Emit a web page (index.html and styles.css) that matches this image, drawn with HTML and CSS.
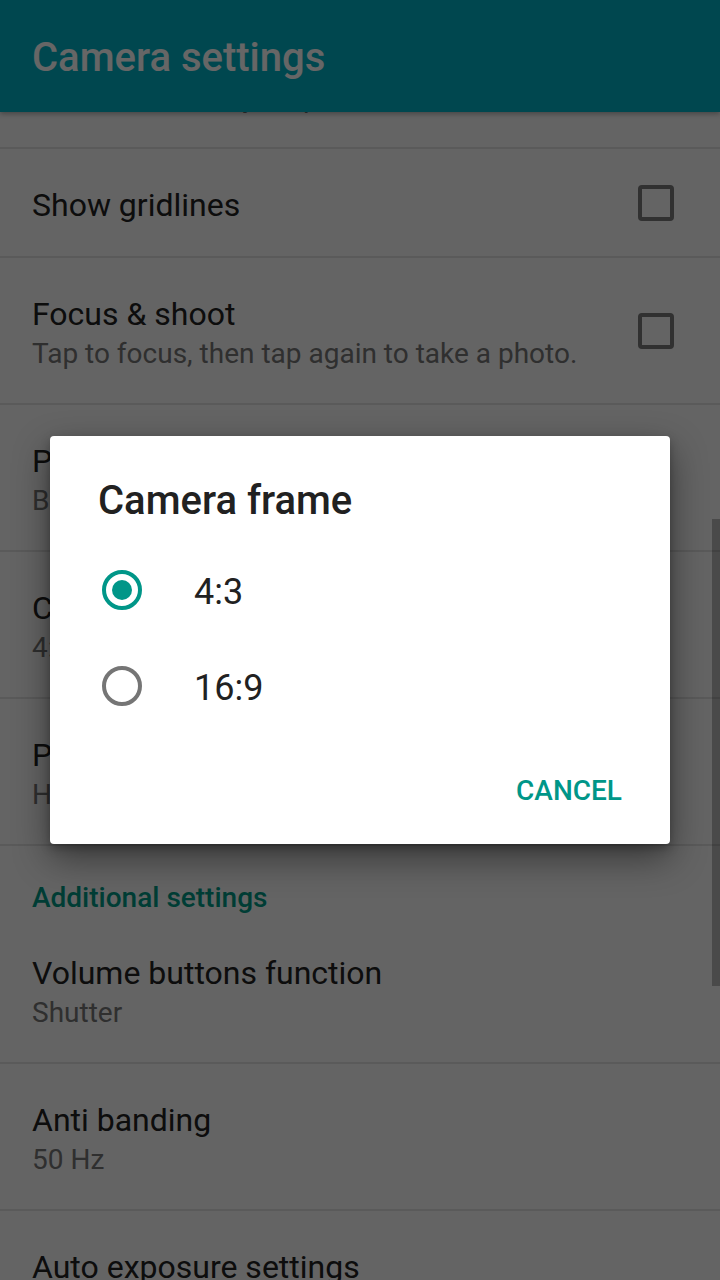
FILE: index.html
```html
<!DOCTYPE html>
<html lang="en">
<head>
<meta charset="utf-8">
<title>Camera settings</title>
<link rel="stylesheet" href="styles.css">
</head>
<body>
<div class="screen">
  <header class="appbar">
    <h1 class="appbar-title">Camera settings</h1>
  </header>

  <div class="scroller">
    <div class="list">
      <div class="pref">
        <div class="pref-text">
          <div class="pref-title">Save location</div>
          <div class="pref-summary">Adds location to your photos</div>
        </div>
      </div>
      <div class="pref single">
        <div class="pref-text">
          <div class="pref-title">Show gridlines</div>
        </div>
        <span class="checkbox"></span>
      </div>
      <div class="pref">
        <div class="pref-text">
          <div class="pref-title">Focus &amp; shoot</div>
          <div class="pref-summary">Tap to focus, then tap again to take a photo.</div>
        </div>
        <span class="checkbox"></span>
      </div>
      <div class="pref">
        <div class="pref-text">
          <div class="pref-title">Picture quality</div>
          <div class="pref-summary">Best</div>
        </div>
      </div>
      <div class="pref">
        <div class="pref-text">
          <div class="pref-title">Camera frame</div>
          <div class="pref-summary">4:3</div>
        </div>
      </div>
      <div class="pref">
        <div class="pref-text">
          <div class="pref-title">Photo resolution</div>
          <div class="pref-summary">High</div>
        </div>
      </div>
      <div class="category">Additional settings</div>
      <div class="pref">
        <div class="pref-text">
          <div class="pref-title">Volume buttons function</div>
          <div class="pref-summary">Shutter</div>
        </div>
      </div>
      <div class="pref">
        <div class="pref-text">
          <div class="pref-title">Anti banding</div>
          <div class="pref-summary">50 Hz</div>
        </div>
      </div>
      <div class="pref">
        <div class="pref-text">
          <div class="pref-title">Auto exposure settings</div>
          <div class="pref-summary">Center-weighted</div>
        </div>
      </div>
    </div>
    <div class="scrollbar"></div>
  </div>

  <div class="scrim">
    <div class="dialog" role="dialog">
      <h2 class="dialog-title">Camera frame</h2>
      <div class="options">
        <div class="option">
          <span class="radio checked"><span class="radio-dot"></span></span>
          <span class="option-label">4:3</span>
        </div>
        <div class="option">
          <span class="radio"></span>
          <span class="option-label">16:9</span>
        </div>
      </div>
      <div class="dialog-actions">
        <span class="btn">Cancel</span>
      </div>
    </div>
  </div>
</div>
</body>
</html>
```

FILE: styles.css
```css
html, body {
  margin: 0;
  padding: 0;
}

body {
  width: 720px;
  height: 1280px;
  overflow: hidden;
  font-family: Roboto, "Noto Sans", "Liberation Sans", sans-serif;
  background: #fafafa;
}

.screen {
  position: relative;
  width: 720px;
  height: 1280px;
  overflow: hidden;
  display: flex;
  flex-direction: column;
  background: #fafafa;
}

/* App bar */
.appbar {
  flex: none;
  height: 112px;
  background: #00b2c6;
  display: flex;
  align-items: center;
  padding: 4px 32px 0;
  box-sizing: border-box;
  position: relative;
  z-index: 1;
  box-shadow: 0 2px 5px rgba(0, 0, 0, 0.3);
}

.appbar-title {
  margin: 0;
  font-size: 40px;
  font-weight: 500;
  line-height: 48px;
  color: #ffffff;
  white-space: nowrap;
}

/* Scrolling preference list */
.scroller {
  flex: 1;
  position: relative;
  overflow: hidden;
}

.list {
  margin-top: -110px;
}

.pref {
  display: flex;
  align-items: center;
  padding: 0 46px 0 32px;
  border-bottom: 2px solid #e0e0e0;
}

.pref-text {
  flex: 1;
  min-width: 0;
  padding: 37px 0 30px;
}

.pref.single .pref-text {
  padding-bottom: 32px;
}

.pref-title {
  font-size: 32px;
  line-height: 38px;
  color: #212121;
  white-space: nowrap;
}

.pref-summary {
  margin-top: 2px;
  font-size: 28px;
  line-height: 38px;
  color: #757575;
  white-space: nowrap;
}

.checkbox {
  flex: none;
  width: 36px;
  height: 36px;
  box-sizing: border-box;
  border: 4px solid #7a7a7a;
  border-radius: 4px;
}

.category {
  padding: 34px 32px 1px;
  font-size: 28px;
  line-height: 36px;
  font-weight: 500;
  color: #009a86;
}

.scrollbar {
  position: absolute;
  top: 407px;
  right: 0;
  width: 8px;
  height: 467px;
  background: rgba(0, 0, 0, 0.26);
}

/* Dialog */
.scrim {
  position: absolute;
  inset: 0;
  z-index: 2;
  background: rgba(0, 0, 0, 0.6);
  display: flex;
  align-items: center;
  justify-content: center;
}

.dialog {
  width: 620px;
  box-sizing: border-box;
  padding: 41px 0 17px;
  background: #ffffff;
  border-radius: 4px;
  box-shadow: 0 14px 36px rgba(0, 0, 0, 0.45), 0 4px 10px rgba(0, 0, 0, 0.25);
}

.dialog-title {
  margin: 0 48px;
  font-size: 40px;
  line-height: 48px;
  font-weight: 500;
  color: #212121;
  white-space: nowrap;
}

.options {
  margin-top: 17px;
}

.option {
  display: flex;
  align-items: center;
  height: 96px;
  padding-left: 52px;
}

.radio {
  flex: none;
  width: 40px;
  height: 40px;
  box-sizing: border-box;
  border: 4px solid #757575;
  border-radius: 50%;
  display: flex;
  align-items: center;
  justify-content: center;
}

.radio.checked {
  border-color: #009688;
}

.radio-dot {
  width: 20px;
  height: 20px;
  border-radius: 50%;
  background: #009688;
}

.option-label {
  margin-left: 52px;
  padding-top: 3px;
  font-size: 36px;
  line-height: 42px;
  color: #212121;
}

.dialog-actions {
  display: flex;
  justify-content: flex-end;
  padding: 21px 32px 0 0;
}

.btn {
  padding: 0 16px;
  font-size: 28px;
  line-height: 72px;
  font-weight: 500;
  color: #009688;
  text-transform: uppercase;
}
```
